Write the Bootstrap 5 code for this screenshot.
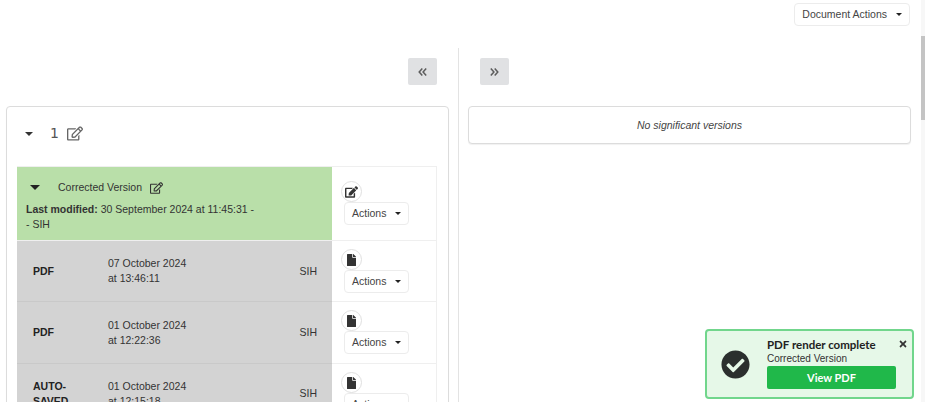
<!DOCTYPE html>
<html lang="en">
<head>
<meta charset="utf-8">
<title>Document versions</title>
<link href="https://cdn.jsdelivr.net/npm/bootstrap@5.3.0/dist/css/bootstrap.min.css" rel="stylesheet">
<style>
html,body{height:402px;overflow:hidden;background:#fff}
body{font-family:"Liberation Sans",Arial,sans-serif;font-size:10.5px;line-height:15px;color:#333;position:relative}
.topbar{height:48px;padding:3px 15px 0 0}
.act-btn{font-size:10.5px;line-height:15px;color:#444;background:#fff;border:1px solid #ececec;border-radius:4px;padding:0 7px 0 7px;height:23px;display:inline-flex;align-items:center;white-space:nowrap}
.caret-mini{display:inline-block;width:0;height:0;border-left:3.5px solid transparent;border-right:3.5px solid transparent;border-top:3.5px solid #222;margin-left:9px}
.pane-l{width:459px;border-right:1px solid #e3e3e3;padding:10px 9px 0 6px;flex:none}
.pane-r{flex:1;padding:10px 14px 0 9px}
.nav-sq{width:29px;height:27px;background:#e0e1e3;border:0;border-radius:2px;padding:0;display:flex;align-items:center;justify-content:center}
.sheet{border:1px solid #dcdcdc;border-radius:4px;box-shadow:0 1px 1px rgba(0,0,0,.06);background:#fff}
.sheet-l{margin-top:21px;height:400px;padding:0 11px 0 10px}
.sheet-r{margin-top:21px;height:38px;font-style:italic;color:#444;display:flex;align-items:center;justify-content:center}
.head-row{height:59px;padding:0 0 6px 8px;font-size:14px;color:#555;font-family:"DejaVu Sans",sans-serif}
.head-num{margin-left:17px}
.tri{display:inline-block;width:0;height:0;border-left:4.5px solid transparent;border-right:4.5px solid transparent;border-top:4.5px solid #333}
.tri-lg{border-left-width:5px;border-right-width:5px;border-top-width:5px;border-top-color:#222}
.ver-list{border-top:1px solid #efefef;border-right:1px solid #efefef}
.ver-row{display:flex;border-bottom:1px solid #efefef}
.ver-main{width:315px;flex:none;background:#d3d3d3;border-bottom:1px solid #c9c9c9;margin-bottom:-1px;display:flex;align-items:center}
.ver-main.is-current{background:#b9dfa9;display:block;padding:13px 9px 0 9px;border-bottom:0;margin-bottom:0}
.cur-head{margin-bottom:7px}
.cur-name{margin-left:18px}
.last-mod{line-height:14.5px}
.ver-side{flex:1;padding:8px 0 0 12px}
.ver-side-top{padding-top:14px}
.ic-disc{width:21px;height:21px;border:1px solid #e0e0e0;border-radius:50%;background:#fff;display:flex;align-items:center;justify-content:center;margin-left:-3px}
.vt{width:75px;padding-left:16px;font-weight:700;color:#222;flex:none;margin-right:16px}
.vd{flex:1}
.vu{padding-right:15px}
.r-1{height:74px}.r-2{height:61px}.r-3{height:62px}.r-4{height:60px}
.alert-box{position:absolute;left:705px;top:329px;width:209px;height:70px;background:#e6f8e8;border:2px solid #71d68c;border-radius:4px;font-family:Lato,sans-serif;color:#222}
.alert-ic{width:60px;padding-right:4px;flex:none}
.alert-title{font-size:11.5px;font-weight:700;line-height:14px;margin-top:7px}
.alert-sub{font-family:"Liberation Sans",sans-serif;font-size:10px;line-height:13px;color:#333}
.view-btn{width:129px;height:23px;background:#20b84a;border:0;border-radius:2px;color:#fff;font-weight:700;font-size:11px;padding:0;margin-top:1px;display:block}
.alert-x{position:absolute;right:5px;top:8px;line-height:0}
.fake-track{position:absolute;right:0;top:0;width:4px;height:402px;background:#f7f7f7}
.fake-thumb{position:absolute;right:0;top:36px;width:4px;height:84px;background:#c4c4c4}
</style>
</head>
<body>
<div class="topbar d-flex justify-content-end">
  <button class="act-btn" type="button">Document Actions<span class="caret-mini"></span></button>
</div>
<div class="d-flex">
  <div class="pane-l">
    <div class="d-flex justify-content-end pe-2 me-1">
      <button class="nav-sq" type="button" aria-label="Collapse left"><svg width="9" height="8" viewBox="0 0 9 8" fill="none" stroke="#5c5c5c" stroke-width="1.5"><path d="M4.3.6 1.2 4l3.1 3.4M8.2.6 5.1 4l3.1 3.4"/></svg></button>
    </div>
    <div class="sheet sheet-l">
      <div class="head-row d-flex align-items-center">
        <span class="tri"></span>
        <span class="head-num">1</span>
        <svg class="ms-2" width="16" height="15" viewBox="0 0 576 512" fill="#666"><path d="M402.3 344.9l32-32c5-5 13.7-1.5 13.7 5.7V464c0 26.5-21.5 48-48 48H48c-26.5 0-48-21.5-48-48V112c0-26.5 21.5-48 48-48h273.5c7.1 0 10.7 8.6 5.7 13.7l-32 32c-1.5 1.5-3.5 2.3-5.7 2.3H48v352h352V350.5c0-2.1.8-4.1 2.3-5.6zm156.6-201.8L296.3 405.7l-90.4 10c-26.2 2.9-48.5-19.2-45.6-45.6l10-90.4L432.9 17.1c22.9-22.9 59.9-22.9 82.7 0l43.2 43.2c22.9 22.9 22.9 60 .1 82.8zM460.1 174L402 115.9 216.2 301.8l-7.3 65.3 65.3-7.3L460.1 174zm64.8-79.7l-43.2-43.2c-4.1-4.1-10.8-4.1-14.8 0L436 82l58.1 58.1 30.9-30.9c4-4.2 4-10.8-.1-14.9z"/></svg>
      </div>
      <div class="ver-list">
        <div class="ver-row r-1">
          <div class="ver-main is-current">
            <div class="d-flex align-items-center cur-head">
              <span class="tri tri-lg ms-1"></span>
              <span class="cur-name">Corrected Version</span>
              <svg class="ms-2" width="13" height="12" viewBox="0 0 576 512" fill="#333"><path d="M402.3 344.9l32-32c5-5 13.7-1.5 13.7 5.7V464c0 26.5-21.5 48-48 48H48c-26.5 0-48-21.5-48-48V112c0-26.5 21.5-48 48-48h273.5c7.1 0 10.7 8.6 5.7 13.7l-32 32c-1.5 1.5-3.5 2.3-5.7 2.3H48v352h352V350.5c0-2.1.8-4.1 2.3-5.6zm156.6-201.8L296.3 405.7l-90.4 10c-26.2 2.9-48.5-19.2-45.6-45.6l10-90.4L432.9 17.1c22.9-22.9 59.9-22.9 82.7 0l43.2 43.2c22.9 22.9 22.9 60 .1 82.8zM460.1 174L402 115.9 216.2 301.8l-7.3 65.3 65.3-7.3L460.1 174zm64.8-79.7l-43.2-43.2c-4.1-4.1-10.8-4.1-14.8 0L436 82l58.1 58.1 30.9-30.9c4-4.2 4-10.8-.1-14.9z"/></svg>
            </div>
            <div class="last-mod"><strong class="fw-bold">Last modified:</strong> 30 September 2024 at 11:45:31 -<br>- SIH</div>
          </div>
          <div class="ver-side ver-side-top">
            <div class="ic-disc"><svg width="13" height="12" viewBox="0 0 576 512" fill="#333"><path d="M402.6 83.2l90.2 90.2c3.8 3.8 3.8 10 0 13.8L274.4 405.6l-92.8 10.3c-12.4 1.4-22.9-9.1-21.5-21.5l10.3-92.8L388.8 83.2c3.8-3.8 10-3.8 13.8 0zm162-22.9l-48.8-48.8c-15.2-15.2-39.9-15.2-55.2 0l-35.4 35.4c-3.8 3.8-3.8 10 0 13.8l90.2 90.2c3.8 3.8 10 3.8 13.8 0l35.4-35.4c15.2-15.3 15.2-40 0-55.2zM384 346.2V448H64V128h229.8c3.2 0 6.2-1.3 8.5-3.5l40-40c7.6-7.6 2.2-20.5-8.5-20.5H48C21.5 64 0 85.5 0 112v352c0 26.5 21.5 48 48 48h352c26.5 0 48-21.5 48-48V306.2c0-10.7-12.9-16-20.5-8.5l-40 40c-2.2 2.3-3.5 5.3-3.5 8.5z"/></svg></div>
            <button class="act-btn" type="button">Actions<span class="caret-mini"></span></button>
          </div>
        </div>
        <div class="ver-row r-2">
          <div class="ver-main">
            <div class="vt">PDF</div><div class="vd">07 October 2024<br>at 13:46:11</div><div class="vu">SIH</div>
          </div>
          <div class="ver-side">
            <div class="ic-disc"><svg width="9" height="12" viewBox="0 0 384 512" fill="#333"><path d="M224 136V0H24C10.7 0 0 10.7 0 24v464c0 13.3 10.7 24 24 24h336c13.3 0 24-10.7 24-24V160H248c-13.2 0-24-10.8-24-24zm160-14.1v6.1H256V0h6.1c6.4 0 12.5 2.5 17 7l97.9 98c4.5 4.5 7 10.6 7 16.9z"/></svg></div>
            <button class="act-btn" type="button">Actions<span class="caret-mini"></span></button>
          </div>
        </div>
        <div class="ver-row r-3">
          <div class="ver-main">
            <div class="vt">PDF</div><div class="vd">01 October 2024<br>at 12:22:36</div><div class="vu">SIH</div>
          </div>
          <div class="ver-side">
            <div class="ic-disc"><svg width="9" height="12" viewBox="0 0 384 512" fill="#333"><path d="M224 136V0H24C10.7 0 0 10.7 0 24v464c0 13.3 10.7 24 24 24h336c13.3 0 24-10.7 24-24V160H248c-13.2 0-24-10.8-24-24zm160-14.1v6.1H256V0h6.1c6.4 0 12.5 2.5 17 7l97.9 98c4.5 4.5 7 10.6 7 16.9z"/></svg></div>
            <button class="act-btn" type="button">Actions<span class="caret-mini"></span></button>
          </div>
        </div>
        <div class="ver-row r-4">
          <div class="ver-main">
            <div class="vt">AUTO-SAVED</div><div class="vd">01 October 2024<br>at 12:15:18</div><div class="vu">SIH</div>
          </div>
          <div class="ver-side">
            <div class="ic-disc"><svg width="9" height="12" viewBox="0 0 384 512" fill="#333"><path d="M224 136V0H24C10.7 0 0 10.7 0 24v464c0 13.3 10.7 24 24 24h336c13.3 0 24-10.7 24-24V160H248c-13.2 0-24-10.8-24-24zm160-14.1v6.1H256V0h6.1c6.4 0 12.5 2.5 17 7l97.9 98c4.5 4.5 7 10.6 7 16.9z"/></svg></div>
            <button class="act-btn" type="button">Actions<span class="caret-mini"></span></button>
          </div>
        </div>
      </div>
    </div>
  </div>
  <div class="pane-r">
    <div class="d-flex ps-2 ms-1">
      <button class="nav-sq" type="button" aria-label="Collapse right"><svg width="9" height="8" viewBox="0 0 9 8" fill="none" stroke="#5c5c5c" stroke-width="1.5"><path d="M.8.6 3.9 4 .8 7.4M4.7.6 7.8 4 4.7 7.4"/></svg></button>
    </div>
    <div class="sheet sheet-r">No significant versions</div>
  </div>
</div>
<div class="alert-box d-flex">
  <div class="alert-ic d-flex align-items-center justify-content-center"><svg width="29" height="29" viewBox="0 0 512 512" fill="#2b2f2e"><path d="M504 256c0 136.967-111.033 248-248 248S8 392.967 8 256 119.033 8 256 8s248 111.033 248 248zM227.314 387.314l184-184c6.248-6.248 6.248-16.379 0-22.627l-22.627-22.627c-6.248-6.249-16.379-6.249-22.628 0L216 308.118l-70.059-70.059c-6.248-6.248-16.379-6.248-22.628 0l-22.627 22.627c-6.248 6.248-6.248 16.379 0 22.627l104 104c6.249 6.249 16.379 6.249 22.628.001z"/></svg></div>
  <div>
    <div class="alert-title">PDF render complete</div>
    <div class="alert-sub">Corrected Version</div>
    <button class="view-btn" type="button">View PDF</button>
  </div>
  <span class="alert-x"><svg width="8" height="10" viewBox="0 0 352 512" fill="#333"><path d="M242.72 256l100.07-100.07c12.28-12.28 12.28-32.19 0-44.48l-22.24-22.24c-12.28-12.28-32.19-12.28-44.48 0L176 189.28 75.93 89.21c-12.28-12.28-32.19-12.28-44.48 0L9.21 111.45c-12.28 12.28-12.28 32.19 0 44.48L109.28 256 9.21 356.07c-12.28 12.28-12.28 32.19 0 44.48l22.24 22.24c12.28 12.28 32.2 12.28 44.48 0L176 322.72l100.07 100.07c12.28 12.28 32.2 12.28 44.48 0l22.24-22.24c12.28-12.28 12.28-32.19 0-44.48L242.72 256z"/></svg></span>
</div>
<div class="fake-track"><div class="fake-thumb"></div></div>
<script src="https://cdn.jsdelivr.net/npm/bootstrap@5.3.0/dist/js/bootstrap.bundle.min.js"></script>
</body>
</html>
